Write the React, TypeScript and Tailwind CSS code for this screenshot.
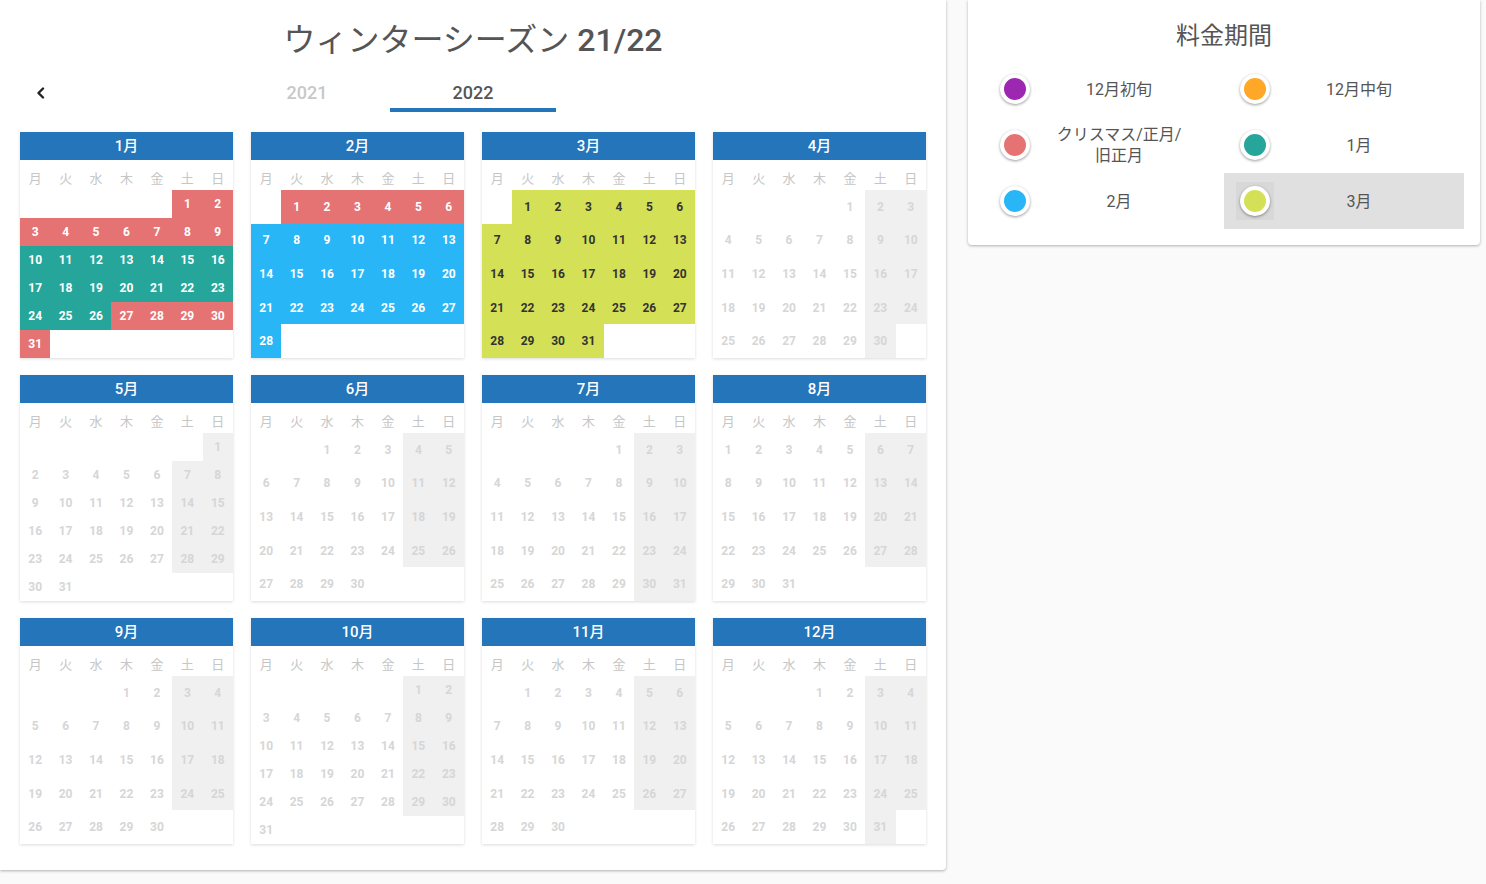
import React from "react";

const FONT = 'Roboto, "Noto Sans CJK JP", sans-serif';

const RED = "#e57373";
const TEAL = "#26a69a";
const BLUE = "#29b6f6";
const LIME = "#d4e157";
const PURPLE = "#9c27b0";
const ORANGE = "#ffa726";

const WEEKDAYS = ["月", "火", "水", "木", "金", "土", "日"];

function buildWeeks(year: number, month: number): (number | null)[][] {
  const first = new Date(year, month, 1).getDay();
  const offset = (first + 6) % 7;
  const days = new Date(year, month + 1, 0).getDate();
  const cells: (number | null)[] = [];
  for (let i = 0; i < offset; i++) cells.push(null);
  for (let d = 1; d <= days; d++) cells.push(d);
  while (cells.length % 7 !== 0) cells.push(null);
  const weeks: (number | null)[][] = [];
  for (let i = 0; i < cells.length; i += 7) weeks.push(cells.slice(i, i + 7));
  return weeks;
}

function colorFor(month: number, d: number): string | null {
  if (month === 0) return d <= 9 || d >= 27 ? RED : TEAL;
  if (month === 1) return d <= 6 ? RED : BLUE;
  if (month === 2) return LIME;
  return null;
}

function MonthCard({ month }: { month: number }) {
  const weeks = buildWeeks(2022, month);
  return (
    <div className="flex flex-col bg-white shadow-[0_1px_3px_rgba(0,0,0,0.14)]">
      <div className="h-[28px] bg-[#2475b9] text-white text-[15px] font-medium flex items-center justify-center">
        {month + 1}月
      </div>
      <div className="grid grid-cols-7 h-[30px] pt-[11px]">
        {WEEKDAYS.map((w) => (
          <div key={w} className="text-center text-[13px] leading-[16px] text-[#c6c6c6]">
            {w}
          </div>
        ))}
      </div>
      <div className="flex-1 flex flex-col">
        {weeks.map((week, wi) => (
          <div key={wi} className="flex-1 basis-0 min-h-[28px] grid grid-cols-7">
            {week.map((d, di) => {
              if (d === null) return <div key={di} />;
              const c = colorFor(month, d);
              const weekend = di >= 5;
              const bg = c ?? (weekend ? "#f0f0f0" : "#ffffff");
              const fg = c ? (c === LIME ? "#333333" : "#ffffff") : "#d6d6d6";
              return (
                <div
                  key={di}
                  className="flex items-center justify-center text-[12px] font-bold"
                  style={{ backgroundColor: bg, color: fg }}
                >
                  {d}
                </div>
              );
            })}
          </div>
        ))}
      </div>
    </div>
  );
}

function LegendItem({
  color,
  label,
  selected,
}: {
  color: string;
  label: React.ReactNode;
  selected?: boolean;
}) {
  return (
    <div className={`h-[56px] flex items-center px-[16px] ${selected ? "bg-[#e0e0e0]" : ""}`}>
      <div className={`-m-[4px] p-[4px] ${selected ? "bg-[#d8d8d8]" : ""}`}>
        <div
          className="w-[30px] h-[30px] rounded-full border-[4px] border-white shadow-[0_1px_3px_rgba(0,0,0,0.4)]"
          style={{ backgroundColor: color }}
        />
      </div>
      <div className="flex-1 text-center text-[16px] leading-[21px] text-[#555]">{label}</div>
    </div>
  );
}

export default function App() {
  return (
    <div className="min-h-[884px] bg-[#fafafa] flex items-start" style={{ fontFamily: FONT }}>
      <div className="w-[946px] bg-white rounded-br-[4px] shadow-[0_1px_3px_rgba(0,0,0,0.3)] pb-[26px]">
        <div className="h-[72px] pt-[8px] flex items-center justify-center text-[32px] text-[#555]">
          <span>ウィンターシーズン</span>
          <span className="ml-[8px] font-medium">21/22</span>
        </div>
        <div className="h-[40px] flex">
          <div className="w-[224px] flex items-center pl-[36px]">
            <svg width="10" height="12" viewBox="0 0 10 12" className="mt-[1px]">
              <path d="M7 1.5 L2.5 6 L7 10.5" fill="none" stroke="#222" strokeWidth="2.4" strokeLinecap="round" strokeLinejoin="round" />
            </svg>
          </div>
          <div className="w-[498px] flex">
            <div className="w-[166px] flex items-center justify-center text-[18px] font-medium text-[#c8c8c8]">
              2021
            </div>
            <div className="w-[166px] relative flex items-center justify-center text-[18px] font-medium text-[#555]">
              2022
              <div className="absolute left-0 right-0 bottom-0 h-[4px] bg-[#2475b9]" />
            </div>
            <div className="w-[166px]" />
          </div>
          <div className="w-[224px]" />
        </div>
        <div className="mt-[20px] px-[20px] grid grid-cols-4 gap-x-[18px] gap-y-[17px]">
          {Array.from({ length: 12 }, (_, m) => (
            <MonthCard key={m} month={m} />
          ))}
        </div>
      </div>
      <div className="ml-[22px] w-[512px] bg-white rounded-b-[4px] shadow-[0_1px_3px_rgba(0,0,0,0.3)]">
        <div className="h-[61px] pt-[10px] flex items-center justify-center text-[24px] text-[#555]">
          料金期間
        </div>
        <div className="px-[16px] pb-[16px] grid grid-cols-2">
          <LegendItem color={PURPLE} label="12月初旬" />
          <LegendItem color={ORANGE} label="12月中旬" />
          <LegendItem
            color={RED}
            label={
              <>
                クリスマス/正月/
                <br />
                旧正月
              </>
            }
          />
          <LegendItem color={TEAL} label="1月" />
          <LegendItem color={BLUE} label="2月" />
          <LegendItem color={LIME} label="3月" selected />
        </div>
      </div>
    </div>
  );
}
